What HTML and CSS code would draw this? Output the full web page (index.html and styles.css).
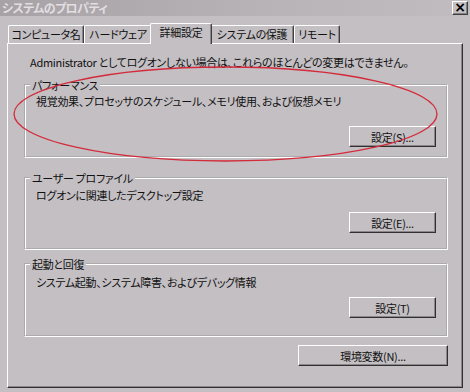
FILE: index.html
```html
<!DOCTYPE html>
<html lang="ja">
<head>
<meta charset="utf-8">
<title>システムのプロパティ</title>
<link rel="stylesheet" href="styles.css">
</head>
<body>
<div class="window">
  <div class="titlebar">
    <span class="title">システムのプロパティ</span>
    <span class="close">×</span>
  </div>
  <div class="tabs">
    <div class="tab w1">コンピュータ名</div>
    <div class="tab w2">ハードウェア</div>
    <div class="tab w3 active">詳細設定</div>
    <div class="tab w4">システムの保護</div>
    <div class="tab w5">リモート</div>
  </div>
  <div class="panel">
    <p class="notice">Administrator としてログオンしない場合は、これらのほとんどの変更はできません。</p>
    <fieldset class="group g1">
      <legend>パフォーマンス</legend>
      <p class="desc">視覚効果、プロセッサのスケジュール、メモリ使用、および仮想メモリ</p>
      <div class="actions"><button class="btn">設定(S)...</button></div>
    </fieldset>
    <fieldset class="group g2">
      <legend>ユーザー プロファイル</legend>
      <p class="desc">ログオンに関連したデスクトップ設定</p>
      <div class="actions"><button class="btn">設定(E)...</button></div>
    </fieldset>
    <fieldset class="group g3">
      <legend>起動と回復</legend>
      <p class="desc">システム起動、システム障害、およびデバッグ情報</p>
      <div class="actions"><button class="btn">設定(T)</button></div>
    </fieldset>
    <div class="footer"><button class="btn wide">環境変数(N)...</button></div>
  </div>
  <svg class="mark" width="470" height="392" viewBox="0 0 470 392">
    <ellipse cx="225.5" cy="114" rx="211.5" ry="47" fill="none" stroke="#d42a3a" stroke-width="1.3"/>
  </svg>
</div>
</body>
</html>
```
FILE: styles.css
```css
html, body {
  margin: 0;
  padding: 0;
  background: #c3bfc3;
}
.window {
  position: relative;
  width: 470px;
  height: 392px;
  overflow: hidden;
  background: #c3bfc3;
  font-family: "Noto Sans CJK JP", "Liberation Sans", sans-serif;
  font-size: 11px;
  letter-spacing: -0.3px;
  font-feature-settings: "palt";
  color: #111;
}
.titlebar {
  height: 16px;
  display: flex;
  justify-content: space-between;
  align-items: flex-start;
  background: linear-gradient(to right, #a6a2a6, #b8b4b8 60%, #c0bcc0);
  padding: 0 2px;
}
.title {
  font-weight: bold;
  color: #e2dee2;
  line-height: 15px;
  font-size: 12px;
  letter-spacing: -0.6px;
}
.close {
  margin-top: 1px;
  width: 16px;
  height: 14px;
  box-sizing: border-box;
  background: #c3bfc3;
  border: 1px solid;
  border-color: #fff #404040 #404040 #fff;
  box-shadow: inset -1px -1px 0 #808080;
  font: bold 14px/11px "DejaVu Sans", sans-serif;
  letter-spacing: 0;
  text-align: center;
  color: #000;
}
.tabs {
  display: flex;
  align-items: flex-end;
  margin: 7px 0 0 8px;
  height: 20px;
}
.tab {
  box-sizing: border-box;
  height: 18px;
  border: 1px solid;
  border-bottom: none;
  border-color: #fff #404040 #fff #fff;
  border-radius: 2px 2px 0 0;
  box-shadow: inset -1px 0 0 #8a868a;
  text-align: center;
  line-height: 16px;
  white-space: nowrap;
}
.tab.active {
  position: relative;
  z-index: 1;
  height: 21px;
  margin: 0 -2px -1px;
  background: #c3bfc3;
  line-height: 17px;
}
.w1 { width: 76px; }
.w2 { width: 68px; }
.w3 { width: 62px; }
.w4 { width: 84px; }
.w5 { width: 46px; }
.panel {
  box-sizing: border-box;
  width: 456px;
  height: 345px;
  margin-left: 7px;
  border: 1px solid;
  border-color: #fff #303030 #303030 #fff;
  box-shadow: inset -1px -1px 0 #8a868a;
  padding: 11px 0 0 16px;
}
.notice {
  margin: 0 0 9px 6px;
  line-height: 14px;
  white-space: nowrap;
}
.group {
  box-sizing: border-box;
  width: 424px;
  margin: 0;
  min-inline-size: 0;
  border: 2px groove #fff;
  padding: 2px 10px 9px 10px;
}
.group legend {
  padding: 0 2px;
  margin-left: -6px;
  line-height: 14px;
}
.desc {
  margin: 0;
  line-height: 14px;
  white-space: nowrap;
}
.actions {
  display: flex;
  justify-content: flex-end;
}
.g1 { margin-bottom: 13px; }
.g1 .actions { margin-top: 18px; }
.g2 { margin-bottom: 7px; padding-top: 3px; padding-bottom: 15px; }
.g2 .actions { margin-top: 10px; }
.g3 { padding-top: 4px; padding-bottom: 17px; }
.g3 .actions { margin-top: 8px; }
.btn {
  box-sizing: border-box;
  width: 87px;
  height: 21px;
  padding: 0;
  background: #c3bfc3;
  border: 1px solid;
  border-color: #fff #303030 #303030 #fff;
  box-shadow: inset -1px -1px 0 #8a868a;
  font: inherit;
  letter-spacing: inherit;
  color: #111;
  line-height: 18px;
}
.footer {
  width: 424px;
  margin-top: 8px;
  display: flex;
  justify-content: flex-end;
}
.btn.wide { width: 150px; }
.mark {
  position: absolute;
  left: 0;
  top: 0;
  pointer-events: none;
}
```
